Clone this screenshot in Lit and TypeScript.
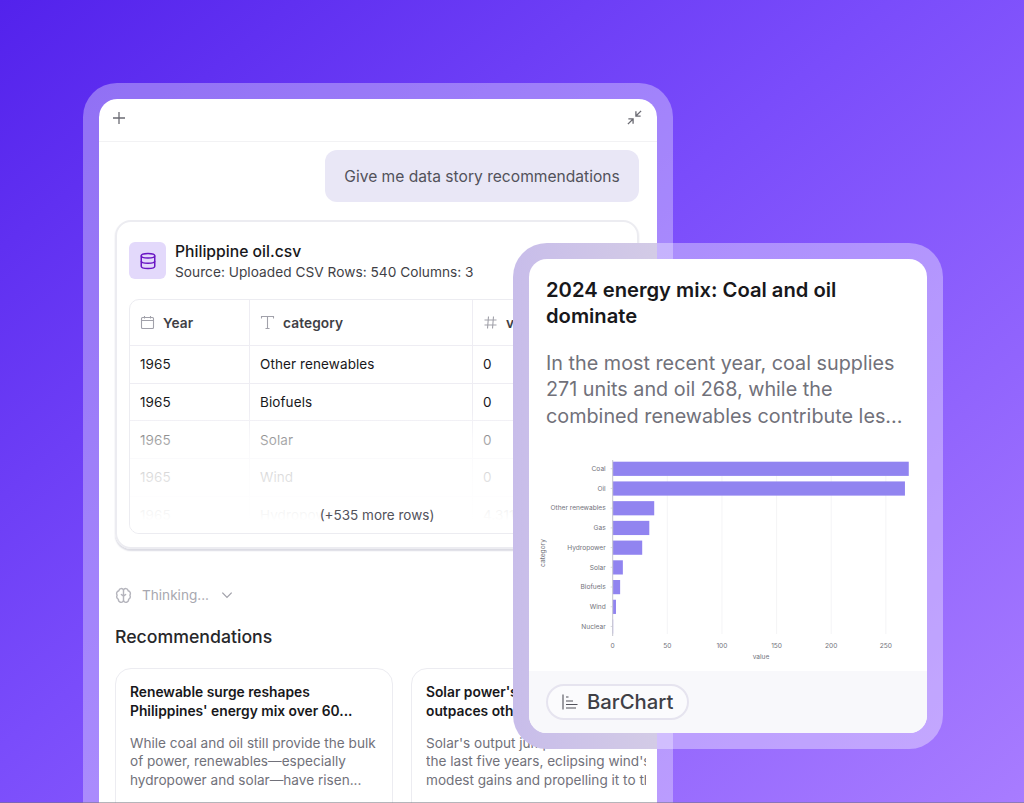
import { LitElement, html, css, svg } from "lit";
import { customElement } from "lit/decorators.js";

const rows = [
  ["1965", "Other renewables", "0"],
  ["1965", "Biofuels", "0"],
  ["1965", "Solar", "0"],
  ["1965", "Wind", "0"],
  ["1965", "Hydropower", "4.311"],
];

const bars: [string, number][] = [
  ["Coal", 271], ["Oil", 267.5], ["Other renewables", 38], ["Gas", 33.5], ["Hydropower", 27],
  ["Solar", 9.3], ["Biofuels", 6.8], ["Wind", 3], ["Nuclear", 0.4],
];

const X0 = 83.7;
const SCALE = 1.0925;

function chart() {
  return html`<svg class="chart" width="398" height="211" viewBox="0 0 398 211">
    ${[50, 100, 150, 200, 250].map((v) => svg`<line x1=${X0 + v * SCALE} x2=${X0 + v * SCALE} y1="8" y2="174" stroke="#f1f1f4" stroke-width="0.8"/>`)}
    ${bars.map(([name, v], i) => {
      const y = 1.7 + i * 19.72;
      return svg`
        <rect x=${X0} y=${y} width=${v * SCALE} height="14.2" fill="#9083f0"/>
        <line x1=${X0 - 2} x2=${X0} y1=${y + 7} y2=${y + 7} stroke="#c9c9d2" stroke-width="0.7"/>
        <text x=${X0 - 7} y=${y + 9.3} text-anchor="end" class="tick">${name}</text>`;
    })}
    <line x1=${X0} x2=${X0} y1="-1" y2="176" stroke="#c4c4ce" stroke-width="1"/>
    ${[0, 50, 100, 150, 200, 250].map((v) => svg`
      <text x=${X0 + v * SCALE} y="188" text-anchor="middle" class="tick">${v}</text>`)}
    <text x="232" y="198.5" text-anchor="middle" class="tick">value</text>
    <text transform="translate(16 93) rotate(-90)" text-anchor="middle" class="tick">category</text>
  </svg>`;
}

@customElement("app-root")
export class AppRoot extends LitElement {
  static styles = css`
    :host {
      display: block;
      position: relative;
      width: 1024px;
      height: 803px;
      overflow: hidden;
      font-family: Inter, "Liberation Sans", sans-serif;
      background: linear-gradient(140deg, #5322ec 0%, #7a4cfb 45%, #a87cff 100%);
    }
    .stage { padding: 83px 0 0 83px; }
    .frame {
      box-sizing: border-box;
      width: 590px;
      height: 800px;
      border: 16px solid rgba(255, 255, 255, 0.33);
      border-radius: 34px;
      background: #fff;
      background-clip: padding-box;
      overflow: hidden;
    }
    .top {
      box-sizing: border-box;
      height: 43px;
      display: flex;
      align-items: center;
      justify-content: space-between;
      padding: 0 14px 5px 13px;
      border-bottom: 1px solid #f2f2f4;
      color: #6b6b73;
    }
    .top svg { display: block; }
    .bubble-row { display: flex; justify-content: flex-end; padding: 8px 18px 0 0; }
    .bubble {
      box-sizing: border-box;
      height: 52px;
      width: 314px;
      background: #e9e7f6;
      border-radius: 12px;
      display: flex;
      align-items: center;
      justify-content: center;
      font-size: 15.6px;
      color: #52525b;
    }
    .csv {
      box-sizing: border-box;
      margin: 18px 18px 0 16px;
      height: 329px;
      border: 2px solid #ececf1;
      border-radius: 16px;
      padding: 20px 12px 0;
      box-shadow: 0 1.5px 1.5px #dcdce4;
    }
    .head { display: flex; gap: 9px; align-items: center; height: 37px; }
    .db {
      width: 37px;
      height: 37px;
      border-radius: 6px;
      background: #e3d9fb;
      color: #6a16c4;
      display: flex;
      align-items: center;
      justify-content: center;
      flex: none;
    }
    .meta { margin-top: 2px; }
    .name { font-size: 15.7px; line-height: 20px; color: #18181b; font-weight: 500; }
    .src { font-size: 13.7px; line-height: 20px; color: #3f3f46; letter-spacing: 0.02px; }
    .table {
      position: relative;
      margin-top: 20px;
      height: 235px;
      border: 1.5px solid #ececf1;
      border-radius: 10px;
      overflow: hidden;
      box-sizing: border-box;
    }
    .row { display: grid; grid-template-columns: 120px 223px 1fr; height: 37.7px; border-bottom: 1.5px solid #eeedf3; box-sizing: border-box; }
    .row.hd { height: 46px; }
    .cell {
      display: flex;
      align-items: center;
      gap: 8px;
      padding-left: 10px;
      font-size: 13.5px;
      color: #18181b;
      border-right: 1.5px solid #eeedf3;
      letter-spacing: 0.1px;
    }
    .cell:last-child { border-right: 0; }
    .hd .cell { font-weight: 600; color: #3f3f46; font-size: 13.7px; }
    .hd svg { color: #a1a1aa; flex: none; }
    .fade {
      position: absolute;
      left: 0;
      right: 0;
      top: 110px;
      bottom: 0;
      background: linear-gradient(to bottom, rgba(255,255,255,0) 0%, rgba(255,255,255,0.6) 24%, rgba(255,255,255,0.86) 54%, rgba(255,255,255,0.96) 84%, #fff 90%);
      display: flex;
      align-items: flex-end;
      justify-content: center;
      font-size: 13.5px;
      color: #52525b;
      padding-bottom: 10px;
      box-sizing: border-box;
    }
    .thinking {
      display: flex;
      align-items: center;
      margin: 36px 0 0 16px;
      height: 20px;
      font-size: 13.6px;
      color: #a8a8b0;
    }
    .thinking span { margin: 0 11px 0 10px; }
    .rec-title { margin: 21px 0 0 16px; font-size: 17.7px; line-height: 22px; font-weight: 500; color: #27272a; }
    .cards { display: flex; gap: 18px; margin: 20px 0 0 16px; }
    .rec {
      box-sizing: border-box;
      flex: none;
      width: 278px;
      height: 160px;
      border: 1.5px solid #ececf1;
      border-radius: 16px;
      padding: 14px 14px;
    }
    .rec h4 { margin: 0; font-size: 13.8px; line-height: 18.5px; font-weight: 600; color: #18181b; white-space: nowrap; }
    .rec p { margin: 14px 0 0; font-size: 13.6px; line-height: 18.4px; color: #71717a; white-space: nowrap; }
    .rec p.clip { width: 220px; overflow: hidden; }
    .float {
      position: absolute;
      left: 513px;
      top: 243px;
      box-sizing: border-box;
      width: 430px;
      height: 506px;
      border: 16px solid transparent;
      border-radius: 34px;
      background:
        linear-gradient(#fff, #fff) padding-box,
        linear-gradient(to right, #c8bdea 0, #d3cbe6 144px, rgba(255, 255, 255, 0.36) 144px) border-box;
      display: flex;
      flex-direction: column;
    }
    .body { padding: 18px 17px 0; }
    .body h3 { margin: 0; font-size: 20.2px; line-height: 26.4px; font-weight: 600; color: #18181b; }
    .body p { margin: 20px 0 0; font-size: 19.8px; line-height: 26.6px; color: #71717a; white-space: nowrap; }
    .chart { display: block; margin-top: 30px; flex: none; opacity: 0.99; }
    .chart .tick { font-size: 6.6px; fill: #71717a; font-family: Inter, sans-serif; }
    .foot {
      flex: 1;
      background: #f8f8fb;
      border-radius: 0 0 17px 17px;
      padding: 13px 17px 0;
    }
    .pill {
      box-sizing: border-box;
      display: inline-flex;
      align-items: center;
      gap: 9px;
      height: 36px;
      width: 143px;
      padding-left: 14px;
      border: 2px solid #e6e4ef;
      border-radius: 18px;
      background: #fbfbfd;
      font-size: 20.3px;
      color: #3f3f46;
      font-weight: 500;
    }
    .pill svg { flex: none; color: #52525b; }
    .edge { position: absolute; left: 0; right: 0; bottom: 0; height: 1px; background: rgba(120, 120, 130, 0.55); }
  `;

  render() {
    return html`
      <div class="stage">
        <div class="frame">
          <div class="top">
            <svg width="14" height="14" viewBox="0 0 14 14" fill="none" stroke="currentColor" stroke-width="1.3"><path d="M7 1v12M1 7h12"/></svg>
            <svg width="17" height="17" viewBox="0 0 18 18" fill="none" stroke="currentColor" stroke-width="1.4"><path d="M2 16l5.5-5.5M2.5 10.5h5v5M16 2l-5.5 5.5M10.5 2.5v5h5"/></svg>
          </div>
          <div class="bubble-row"><div class="bubble">Give me data story recommendations</div></div>
          <div class="csv">
            <div class="head">
              <div class="db">
                <svg width="18" height="18" viewBox="0 0 24 24" fill="none" stroke="currentColor" stroke-width="2"><ellipse cx="12" cy="5" rx="9" ry="3"/><path d="M3 5v14c0 1.66 4 3 9 3s9-1.34 9-3V5"/><path d="M3 12c0 1.66 4 3 9 3s9-1.34 9-3"/></svg>
              </div>
              <div class="meta">
                <div class="name">Philippine oil.csv</div>
                <div class="src">Source: Uploaded CSV Rows: 540 Columns: 3</div>
              </div>
            </div>
            <div class="table">
              <div class="row hd">
                <div class="cell">
                  <svg width="15" height="15" viewBox="0 0 15 15" fill="none" stroke="currentColor" stroke-width="1.1"><rect x="1.5" y="2.5" width="12" height="11" rx="1"/><path d="M1.5 5.5h12M4.5 1v2.5M10.5 1v2.5"/></svg>
                  <span>Year</span>
                </div>
                <div class="cell">
                  <svg width="15" height="15" viewBox="0 0 15 15" fill="none" stroke="currentColor" stroke-width="1.1"><path d="M1.5 3.5V1.5h12v2M7.5 1.5v12M5.5 13.5h4"/></svg>
                  <span>category</span>
                </div>
                <div class="cell">
                  <svg width="15" height="15" viewBox="0 0 15 15" fill="none" stroke="currentColor" stroke-width="1.1"><path d="M5.5 1.5l-1 12M10.5 1.5l-1 12M1.5 5h12M1.5 10h12"/></svg>
                  <span>value</span>
                </div>
              </div>
              ${rows.map(
                (r) => html`<div class="row">
                  <div class="cell">${r[0]}</div>
                  <div class="cell">${r[1]}</div>
                  <div class="cell">${r[2]}</div>
                </div>`
              )}
              <div class="fade">(+535 more rows)</div>
            </div>
          </div>
          <div class="thinking">
            <svg width="17" height="17" viewBox="0 0 24 24" fill="none" stroke="#b4b4bc" stroke-width="2" stroke-linecap="round" stroke-linejoin="round"><path d="M12 4a3.5 3.5 0 0 0-6.5 1.2A4 4 0 0 0 3 11.5a4.2 4.2 0 0 0 1.8 6A3.8 3.8 0 0 0 12 19.5a3.8 3.8 0 0 0 7.2-2A4.2 4.2 0 0 0 21 11.5a4 4 0 0 0-2.5-6.3A3.5 3.5 0 0 0 12 4z"/><path d="M12 4v16M12 13l-3-2.5M12 13l3-2.5"/></svg>
            <span>Thinking...</span>
            <svg width="14" height="14" viewBox="0 0 24 24" fill="none" stroke="#a1a1aa" stroke-width="2.2"><path d="M4 8l8 8 8-8"/></svg>
          </div>
          <div class="rec-title">Recommendations</div>
          <div class="cards">
            <div class="rec">
              <h4>Renewable surge reshapes<br />Philippines' energy mix over 60...</h4>
              <p>While coal and oil still provide the bulk<br />of power, renewables—especially<br />hydropower and solar—have risen...</p>
            </div>
            <div class="rec">
              <h4>Solar power's rise<br />outpaces other sources</h4>
              <p class="clip">Solar's output jumped over<br />the last five years, eclipsing wind's modest<br />modest gains and propelling it to the top</p>
            </div>
          </div>
        </div>
      </div>
      <div class="float">
        <div class="body">
          <h3>2024 energy mix: Coal and oil dominate</h3>
          <p>In the most recent year, coal supplies<br />271 units and oil 268, while the<br />combined renewables contribute les...</p>
        </div>
        ${chart()}
        <div class="foot">
          <div class="pill">
            <svg width="16" height="16" viewBox="0 0 16 16" fill="none" stroke="currentColor" stroke-width="1.1"><path d="M1 0.5v15M4 3h2.5M4 7h7M4 10.5h11.5M4 14h10"/></svg>
            BarChart
          </div>
        </div>
      </div>
      <div class="edge"></div>
    `;
  }
}
